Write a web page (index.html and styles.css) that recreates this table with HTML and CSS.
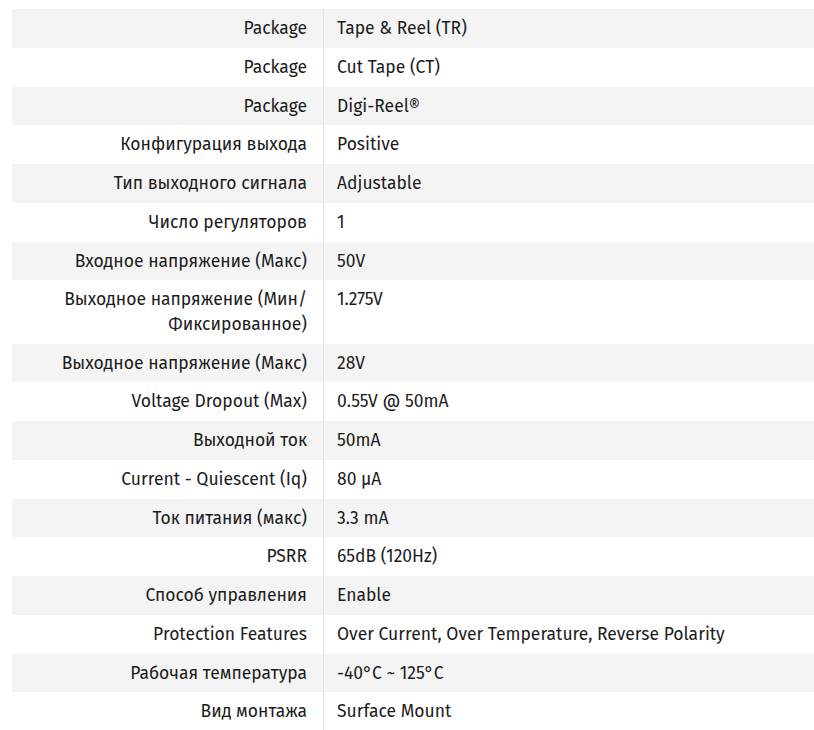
FILE: index.html
```html
<!DOCTYPE html>
<html lang="ru">
<head>
<meta charset="utf-8">
<title>Specs</title>
<link rel="stylesheet" href="styles.css">
</head>
<body>
<table class="specs">
  <tbody>
    <tr><th>Package</th><td>Tape &amp; Reel (TR)</td></tr>
    <tr><th>Package</th><td>Cut Tape (CT)</td></tr>
    <tr><th>Package</th><td>Digi-Reel®</td></tr>
    <tr><th>Конфигурация выхода</th><td>Positive</td></tr>
    <tr><th>Тип выходного сигнала</th><td>Adjustable</td></tr>
    <tr><th>Число регуляторов</th><td>1</td></tr>
    <tr><th>Входное напряжение (Макс)</th><td>50V</td></tr>
    <tr><th>Выходное напряжение (Мин/<br>Фиксированное)</th><td>1.275V</td></tr>
    <tr><th>Выходное напряжение (Макс)</th><td>28V</td></tr>
    <tr><th>Voltage Dropout (Max)</th><td>0.55V @ 50mA</td></tr>
    <tr><th>Выходной ток</th><td>50mA</td></tr>
    <tr><th>Current - Quiescent (Iq)</th><td>80 µA</td></tr>
    <tr><th>Ток питания (макс)</th><td>3.3 mA</td></tr>
    <tr><th>PSRR</th><td>65dB (120Hz)</td></tr>
    <tr><th>Способ управления</th><td>Enable</td></tr>
    <tr><th>Protection Features</th><td>Over Current, Over Temperature, Reverse Polarity</td></tr>
    <tr><th>Рабочая температура</th><td>-40°C ~ 125°C</td></tr>
    <tr><th>Вид монтажа</th><td>Surface Mount</td></tr>
  </tbody>
</table>
</body>
</html>
```
FILE: styles.css
```css
html, body {
  margin: 0;
  padding: 0;
  background: #ffffff;
}
body {
  padding: 9px 0 0 12px;
  font-family: "Fira Sans", Roboto, "Noto Sans", sans-serif;
  font-size: 17.5px;
  color: #1c1c1c;
}
.specs {
  width: 802px;
  border-collapse: collapse;
  table-layout: fixed;
}
.specs tr:nth-child(odd) {
  background: #f4f4f4;
}
.specs th,
.specs td {
  padding: 8px 0 6.25px;
  line-height: 24.5px;
  vertical-align: top;
  font-weight: 400;
}
.specs th {
  width: 295px;
  padding-right: 16px;
  text-align: right;
  border-right: 1px solid #e4e4e4;
}
.specs td {
  padding-left: 13px;
  text-align: left;
}
```
